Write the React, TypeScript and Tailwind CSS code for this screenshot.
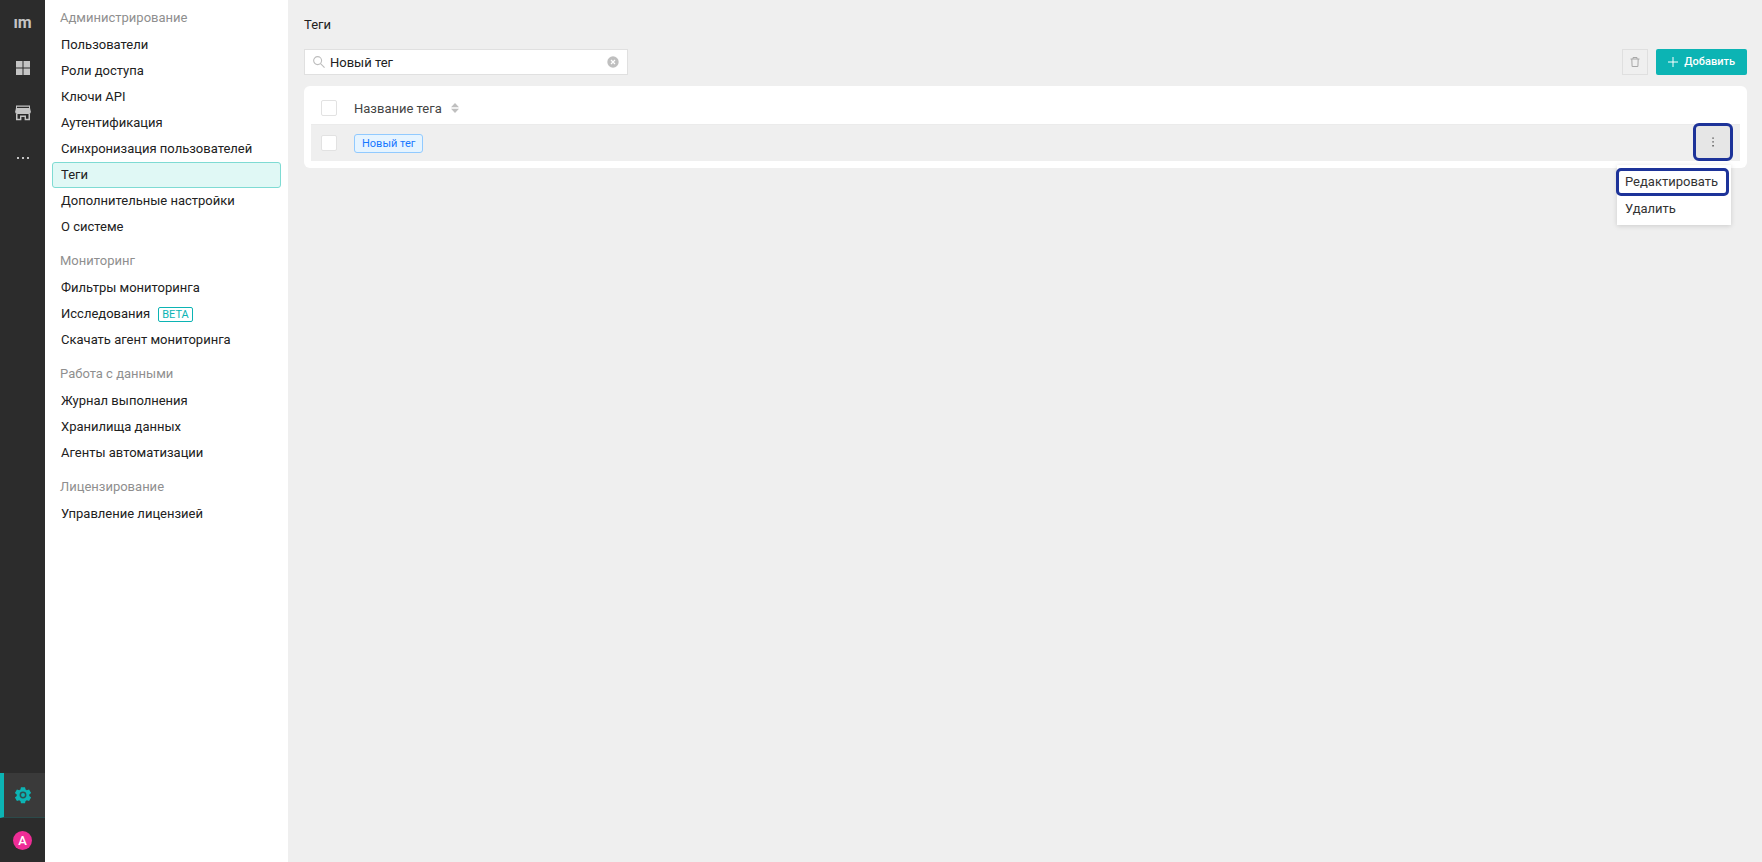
import { useState } from "react";

type Item = { label: string; active?: boolean; beta?: boolean };
type Section = { title: string; items: Item[] };

const sections: Section[] = [
  {
    title: "Администрирование",
    items: [
      { label: "Пользователи" },
      { label: "Роли доступа" },
      { label: "Ключи API" },
      { label: "Аутентификация" },
      { label: "Синхронизация пользователей" },
      { label: "Теги", active: true },
      { label: "Дополнительные настройки" },
      { label: "О системе" },
    ],
  },
  {
    title: "Мониторинг",
    items: [
      { label: "Фильтры мониторинга" },
      { label: "Исследования", beta: true },
      { label: "Скачать агент мониторинга" },
    ],
  },
  {
    title: "Работа с данными",
    items: [
      { label: "Журнал выполнения" },
      { label: "Хранилища данных" },
      { label: "Агенты автоматизации" },
    ],
  },
  { title: "Лицензирование", items: [{ label: "Управление лицензией" }] },
];

function Rail() {
  const cell = "flex h-[45px] w-full items-center justify-center";
  return (
    <nav aria-label="Разделы" className="flex w-[45px] shrink-0 flex-col bg-[#2c2c2c] text-[#c4c4c4]">
      <a href="#home" className={`${cell} text-base font-bold leading-none`}>
        ım
      </a>
      <a href="#apps" aria-label="Приложения" className={cell}>
        <svg width="14" height="14" viewBox="0 0 14 14" fill="currentColor">
          <path d="M0 0h6.5v6.5H0zM7.5 0H14v6.5H7.5zM0 7.5h6.5V14H0zM7.5 7.5H14V14H7.5z" />
        </svg>
      </a>
      <a href="#store" aria-label="Магазин" className={cell}>
        <svg width="16" height="16" viewBox="0 0 16 16" fill="currentColor">
          <path d="M1 0.500h14v1.200H1zM1 1.700h1v1.300H1zM14 1.700h1v1.300h-1z" />
          <path d="M1 3h14l.8 3.500c0 1.500-.6 2.500-1.800 2.500H2C.8 9 .2 8 .2 6.500z" />
          <path d="M1 9h1.500v4.800H5v-3.300h6v3.300h2.500V9H15v6.200H9.600v-3.300H6.400v3.300H1z" />
        </svg>
      </a>
      <button type="button" aria-label="Ещё" className={cell}>
        <svg width="14" height="4" viewBox="0 0 14 4" fill="currentColor">
          <path d="M1 1h2v2H1zM6 1h2v2H6zM11 1h2v2h-2z" />
        </svg>
      </button>
      <div className="mt-auto">
        <a
          href="#settings"
          aria-label="Настройки"
          className="flex h-[45px] items-center justify-center border-b border-l-4 border-b-[#2b4a4a] border-l-[#0cb4b4] bg-[#3a3a3a] pr-1 text-[#0cb4b4]"
        >
          <svg width="18" height="18" viewBox="0 0 24 24" fill="currentColor">
            <path d="M9.300 1.500h5.400l.7 3.200c.6.200 1.100.5 1.600.9l3.100-1 2.700 4.700-2.400 2.100v1.800l2.400 2.100-2.700 4.700-3.100-1c-.5.400-1 .700-1.600.9l-.7 3.100H9.300l-.7-3.100c-.6-.2-1.100-.5-1.600-.9l-3.100 1-2.700-4.700 2.400-2.100v-1.800L1.200 9.300l2.700-4.700 3.100 1c.5-.4 1-.7 1.600-.9z" />
            <circle cx="12" cy="12" r="3.600" fill="none" stroke="#2f4f50" strokeWidth="2" />
          </svg>
        </a>
        <button type="button" aria-label="Профиль" className="flex h-11 w-full items-center justify-center">
          <span className="flex size-[19px] items-center justify-center rounded-full bg-[#ee2d96] text-[13px] font-medium leading-none text-white">
            A
          </span>
        </button>
      </div>
    </nav>
  );
}

function Sidebar() {
  return (
    <aside className="flex w-[243px] shrink-0 flex-col gap-[7px] bg-white px-[7px] pt-1">
      {sections.map((s) => (
        <section key={s.title}>
          <h2 className="h-7 px-2 text-[13px] leading-[27px] text-[#8f8f8f]">{s.title}</h2>
          <ul>
            {s.items.map((i) => (
              <li key={i.label}>
                <a
                  href="#item"
                  aria-current={i.active ? "page" : undefined}
                  className={`flex h-[26px] items-center rounded-[3px] border px-2 text-[13px] ${
                    i.active ? "border-[#7edbd3] bg-[#e0f8f5]" : "border-transparent"
                  }`}
                >
                  {i.label}
                  {i.beta && (
                    <span className="ml-2 rounded-[2px] border border-[#0cb4b4] px-[3px] text-[11px] leading-[13px] text-[#0cb4b4]">
                      BETA
                    </span>
                  )}
                </a>
              </li>
            ))}
          </ul>
        </section>
      ))}
    </aside>
  );
}

function Check({ label }: { label: string }) {
  return (
    <input
      type="checkbox"
      aria-label={label}
      className="block size-4 appearance-none rounded-[2px] border border-[#e2e2e2] bg-white checked:bg-[#0cb4b4]"
    />
  );
}

export default function App() {
  const [query, setQuery] = useState("Новый тег");
  return (
    <div className="flex min-h-screen bg-[#efefef] font-[Roboto,sans-serif] text-[13px] text-[#212121]">
      <Rail />
      <Sidebar />
      <main className="min-w-0 flex-1 pl-4 pr-[15px] pt-[15px]">
        <h1 className="h-[34px] text-[13px] leading-5">Теги</h1>
        <div className="flex items-center gap-2">
          <div className="flex h-[26px] w-[324px] items-center border border-[#e0e0e0] bg-white px-2">
            <svg width="12" height="12" viewBox="0 0 13 13" fill="none" stroke="#bdbdbd" strokeWidth="1.200">
              <circle cx="5" cy="5" r="4.300" />
              <path d="M8.200 8.200l4.300 4.300" />
            </svg>
            <input
              type="text"
              aria-label="Поиск"
              value={query}
              onChange={(e) => setQuery(e.target.value)}
              className="ml-[5px] min-w-0 flex-1 bg-transparent pt-px outline-none"
            />
            <button type="button" aria-label="Очистить" onClick={() => setQuery("")}>
              <svg width="12" height="12" viewBox="0 0 12 12" className="block">
                <circle cx="6" cy="6" r="5.700" fill="#bfbfbf" />
                <path d="M4 4l4 4M8 4l-4 4" stroke="#fff" strokeWidth="1.200" />
              </svg>
            </button>
          </div>
          <button
            type="button"
            aria-label="Удалить выбранные"
            className="ml-auto flex size-[26px] items-center justify-center border border-[#dfdfdf]"
          >
            <svg width="10" height="10" viewBox="0 0 10 10" fill="none" stroke="#a8a8a8">
              <path d="M0.500 2h9M3 2V.5h4V2M1.800 2l.3 7.500h5.800L8.200 2" />
            </svg>
          </button>
          <button
            type="button"
            className="flex h-[26px] items-center gap-[6px] rounded-[2px] bg-[#0cb4b4] px-3 text-[11px] font-medium text-white"
          >
            <svg width="10" height="10" viewBox="0 0 10 10" stroke="#fff" strokeWidth="1">
              <path d="M5 0v10M0 5h10" />
            </svg>
            Добавить
          </button>
        </div>

        <div className="mt-[11px] rounded-md bg-white p-[7px]">
          <table className="w-full text-left">
            <thead>
              <tr className="h-[31px] border-b border-[#ebebeb]">
                <th className="w-[43px] pl-[10px]">
                  <Check label="Выбрать все" />
                </th>
                <th className="font-normal text-[#444444]">
                  <button type="button" className="flex items-center gap-[9px]">
                    Название тега
                    <svg width="8" height="10" viewBox="0 0 8 10" fill="#bfbfbf">
                      <path d="M4 0l4 4.200H0zM4 10l4-4.200H0z" />
                    </svg>
                  </button>
                </th>
                <th aria-label="Действия" />
              </tr>
            </thead>
            <tbody>
              <tr className="h-[37px] bg-[#efefef]">
                <td className="pl-[10px]">
                  <Check label="Выбрать Новый тег" />
                </td>
                <td>
                  <span className="inline-block rounded-[3px] border border-[#91caff] bg-[#e6f4ff] px-[7px] text-[11px] leading-[17px] text-[#1677ff]">
                    Новый тег
                  </span>
                </td>
                <td className="w-[60px] pr-[7px]">
                  <div className="relative ml-auto h-9 w-10">
                    <button
                      type="button"
                      aria-label="Меню тега"
                      className="absolute -top-[2px] left-0 flex h-[38px] w-10 items-center justify-center rounded-md border-[3px] border-[#1d3399] bg-[#e6e6e6]"
                    >
                      <svg width="2" height="10" viewBox="0 0 2 10" fill="#444444">
                        <path d="M0.400 0.500h1.300v1.300H.4zM.4 4.300h1.300v1.300H.4zM.4 8.100h1.300v1.300H.4z" />
                      </svg>
                    </button>
                    <div
                      role="menu"
                      className="absolute right-[2px] top-10 flex w-[114px] flex-col bg-white pb-[3px] pt-[3px] text-[#333333] shadow-[0_1px_5px_rgba(0,0,0,0.15)]"
                    >
                      <button
                        type="button"
                        role="menuitem"
                        className="-ml-px mr-[2px] h-7 rounded-[5px] border-[3px] border-[#1d3399] px-[6px] text-left"
                      >
                        Редактировать
                      </button>
                      <button type="button" role="menuitem" className="h-[26px] px-2 text-left">
                        Удалить
                      </button>
                    </div>
                  </div>
                </td>
              </tr>
            </tbody>
          </table>
        </div>
      </main>
    </div>
  );
}
